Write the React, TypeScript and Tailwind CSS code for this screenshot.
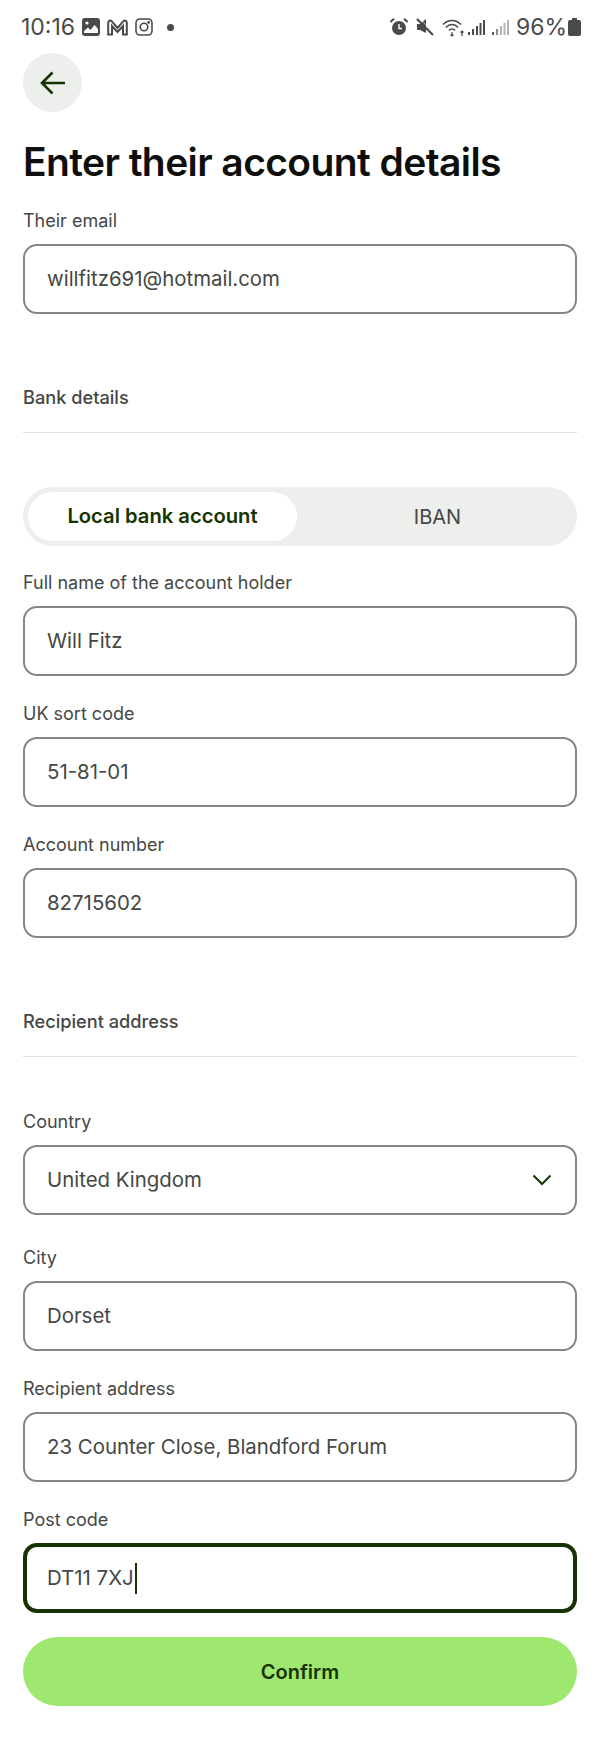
import React from "react";

const Field = ({ label, value, select, focus, className = "" }: { label: string; value: string; select?: boolean; focus?: boolean; className?: string }) => (
  <div className={className}>
    <div className="text-[18px] leading-[24px] text-[#454745]">{label}</div>
    <div className={`mt-[11px] flex h-[70px] items-center justify-between rounded-[14px] bg-white pr-[23px] ${focus ? "border-[4px] border-[#163300] pl-[20px]" : "border-2 border-[#868685] pl-[22px]"}`}>
      <span className="flex items-center text-[20.4px] text-[#454745]">
        {value}
        {focus && <span className="ml-[1px] inline-block h-[31px] w-[2.5px] bg-[#163300]" />}
      </span>
      {select && (
        <svg width="20" height="12" viewBox="0 0 20 12" fill="none" stroke="#163300" strokeWidth="2">
          <path d="M1.5 1.5 L10 10 L18.5 1.5" />
        </svg>
      )}
    </div>
  </div>
);

const Section = ({ title, className = "" }: { title: string; className?: string }) => (
  <div className={className}>
    <div className="text-[18.2px] font-medium leading-[22px] text-[#454745]">{title}</div>
    <div className="mt-[24px] h-[1px] bg-[#dfe0de]" />
  </div>
);

const StatusBar = () => (
  <div className="flex h-[53px] items-center justify-between pl-[21px] pr-[19px] pt-[1px] text-[#4a4a4a]">
    <div className="flex items-center">
      <span className="text-[23px] leading-none">10:16</span>
      <svg className="ml-[7px]" width="18" height="18" viewBox="0 0 18 18">
        <path fill="#4a4a4a" fillRule="evenodd" d="M3 0h12a3 3 0 0 1 3 3v12a3 3 0 0 1-3 3H3a3 3 0 0 1-3-3V3a3 3 0 0 1 3-3zM2 13v2h14v-4l-3.5-4-4 5-2.5-2.5z" />
        <circle cx="5" cy="5" r="1.6" fill="#fff" />
      </svg>
      <svg className="ml-[7px]" width="21" height="17" viewBox="0 0 21 17" fill="none" stroke="#4a4a4a" strokeWidth="2">
        <path d="M1.2 15.5V3.5a2 2 0 0 1 3.4-1.3L10.5 9l5.900-6.800A2 2 0 0 1 19.800 3.500V15.500H16V7l-5.500 6L5 7v8.500z" />
      </svg>
      <svg className="ml-[7px]" width="18" height="18" viewBox="0 0 18 18" fill="none" stroke="#4a4a4a" strokeWidth="1.600">
        <rect x="1" y="1" width="16" height="16" rx="4" />
        <circle cx="9" cy="9" r="3.800" />
        <circle cx="13.600" cy="4.400" r="0.600" fill="#4a4a4a" />
      </svg>
      <span className="ml-[14px] h-[7px] w-[7px] rounded-full bg-[#4a4a4a]" />
    </div>
    <div className="flex items-center">
      <svg width="18" height="18" viewBox="0 0 18 18">
        <circle cx="9" cy="10" r="7" fill="#4a4a4a" />
        <path d="M9 6v4.500h3" fill="none" stroke="#fff" strokeWidth="1.400" />
        <path d="M0.500 4L4 0.800M17.500 4L14 0.800" stroke="#4a4a4a" strokeWidth="2" />
      </svg>
      <svg className="ml-[8px]" width="18" height="18" viewBox="0 0 18 18">
        <path fill="#4a4a4a" d="M1 6h3l6-5v14l-6-3H1z" />
        <path d="M1 1l16 16" stroke="#4a4a4a" strokeWidth="2.200" />
        <path d="M1 1l16 16" stroke="#fff" strokeWidth="0.600" transform="translate(1.500 -1.500)" />
      </svg>
      <svg className="ml-[8px]" width="24" height="19" viewBox="0 0 24 19" fill="none" stroke="#4a4a4a" strokeWidth="1.500">
        <path d="M1 6.500C6 1 14 1 19 6.500M3.800 9.500C7.500 5.500 12.500 5.500 16.200 9.500M6.800 12.500C8.800 10.500 11.200 10.500 13.200 12.500" />
        <path d="M10 14v4M8.500 16.500L10 18l1.500-1.500M20 18v-5M18.500 14.500L20 13l1.500 1.500" strokeWidth="1.200" />
      </svg>
      <svg className="ml-[2px]" width="17" height="17" viewBox="0 0 17 17" fill="#4a4a4a">
        <rect x="0" y="13" width="2" height="3" /><rect x="4" y="10" width="2" height="6" /><rect x="8" y="7" width="2" height="9" /><rect x="11.500" y="4" width="2" height="12" /><rect x="15" y="1" width="2" height="15" />
      </svg>
      <svg className="ml-[7px]" width="17" height="17" viewBox="0 0 17 17" fill="#b5b5b5">
        <rect x="0" y="13" width="2" height="3" fill="#5a5a5a" /><rect x="4" y="10" width="2" height="6" fill="#8a8a8a" /><rect x="8" y="7" width="2" height="9" /><rect x="11.500" y="4" width="2" height="12" /><rect x="15" y="1" width="2" height="15" />
      </svg>
      <span className="ml-[7px] text-[23px] leading-none">96%</span>
      <svg className="ml-[1px]" width="13" height="18" viewBox="0 0 13 18" fill="#4a4a4a">
        <path d="M4 0h5v2h2a2 2 0 0 1 2 2v12a2 2 0 0 1-2 2H2a2 2 0 0 1-2-2V4a2 2 0 0 1 2-2h2z" />
      </svg>
    </div>
  </div>
);

export default function App() {
  return (
    <div className="h-[1753px] w-[600px] bg-white font-['Inter',sans-serif]">
      <StatusBar />
      <div className="px-[23px]">
        <div className="flex h-[59px] w-[59px] items-center justify-center rounded-full bg-[#edefec]">
          <svg width="26" height="24" viewBox="0 0 26 24" fill="none" stroke="#163300" strokeWidth="2.600">
            <path d="M25 12H2.500M12.500 1.500L2 12l10.500 10.500" />
          </svg>
        </div>
        <h1 className="mt-[25px] text-[39px] font-semibold leading-[50px] tracking-[-0.6px] text-[#0e0f0c]">Enter their account details</h1>
        <Field className="mt-[22px]" label="Their email" value="willfitz691@hotmail.com" />
        <Section className="mt-[72px]" title="Bank details" />
        <div className="mt-[54px] flex h-[59px] rounded-full bg-[#edefec] p-[5px]">
          <div className="flex w-[269px] items-center justify-center rounded-full bg-white text-[20.2px] font-semibold text-[#163300]">Local bank account</div>
          <div className="flex flex-1 items-center justify-center pl-[6px] text-[20px] text-[#454745]">IBAN</div>
        </div>
        <Field className="mt-[25px]" label="Full name of the account holder" value="Will Fitz" />
        <Field className="mt-[26px]" label="UK sort code" value="51-81-01" />
        <Field className="mt-[26px]" label="Account number" value="82715602" />
        <Section className="mt-[72px]" title="Recipient address" />
        <Field className="mt-[53px]" label="Country" value="United Kingdom" select />
        <Field className="mt-[31px]" label="City" value="Dorset" />
        <Field className="mt-[26px]" label="Recipient address" value="23 Counter Close, Blandford Forum" />
        <Field className="mt-[26px]" label="Post code" value="DT11 7XJ" focus />
        <div className="mt-[24px] flex h-[69px] items-center justify-center rounded-full bg-[#9fe870] text-[20px] font-semibold text-[#163300]">Confirm</div>
      </div>
    </div>
  );
}
